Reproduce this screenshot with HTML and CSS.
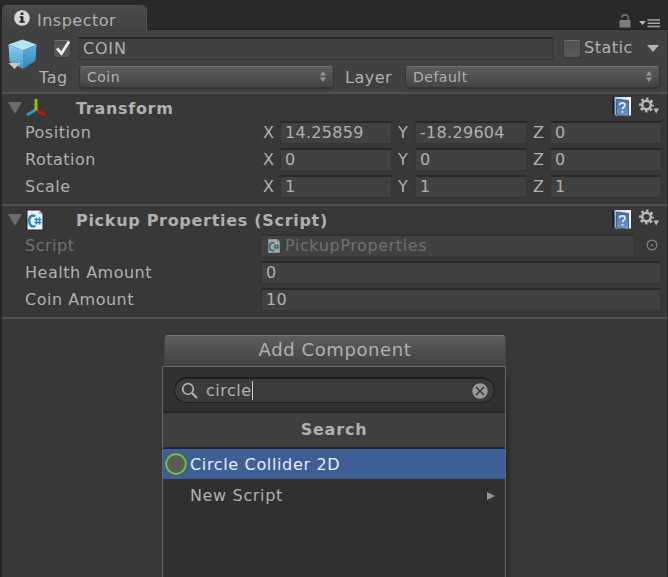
FILE: index.html
```html
<!DOCTYPE html>
<html lang="en">
<head>
<meta charset="utf-8">
<title>Inspector</title>
<link rel="stylesheet" href="styles.css">
</head>
<body>
<svg class="defs" width="0" height="0">
  <defs>
    <linearGradient id="page" x1="0" y1="0" x2="1" y2="0"><stop offset="0" stop-color="#b9cfe5"/><stop offset="1" stop-color="#f0f5fa"/></linearGradient>
    <linearGradient id="cover" x1="0" y1="0" x2="0" y2="1"><stop offset="0" stop-color="#4a6ea6"/><stop offset="1" stop-color="#7697c4"/></linearGradient>
    <linearGradient id="left" x1="0" y1="0" x2="0" y2="1"><stop offset="0" stop-color="#8bcdee"/><stop offset="1" stop-color="#4a9dcc"/></linearGradient>
    <linearGradient id="right" x1="0" y1="0" x2="0" y2="1"><stop offset="0" stop-color="#5eb2df"/><stop offset="1" stop-color="#3287ba"/></linearGradient>
    <symbol id="book" viewBox="0 0 20 21">
      <path d="M0.500 1.5 3 0.5V20L0.500 17z" fill="#101a2c"/>
      <path d="M2.5 1H19V19.5H4z" fill="url(#page)"/>
      <path d="M2.5 1 5 3.5V20.5L2.5 18.500z" fill="#94b3d5"/>
      <path d="M4.500 3.3 16.5 4.5V20.3L4.5 19z" fill="url(#cover)" stroke="#31517e" stroke-width=".8"/>
      <path d="M7.500 9.2C7.500 6 13 6 13 9.2C13 11 10.500 11 10.500 13.300M10.500 15V16.800" fill="none" stroke="#dbe7f4" stroke-width="1.700"/>
    </symbol>
    <symbol id="gear" viewBox="0 0 20 20">
      <circle cx="7.5" cy="8" r="4.3" fill="none" stroke="#b9b9b9" stroke-width="2.5"/>
      <circle cx="7.5" cy="8" r="6.3" fill="none" stroke="#b9b9b9" stroke-width="2.4" stroke-dasharray="2.500 2.448" stroke-dashoffset="1.25"/>
      <path d="M14.500 11.500H20L17.200 16.500z" fill="#b9b9b9"/>
    </symbol>
    <symbol id="csharp" viewBox="0 0 18 22">
      <path d="M1 1H13L17 5V21H1z" fill="#e9eef1" stroke="#222" stroke-width="1"/>
      <path d="M13 1V5H17z" fill="#aebcc4"/>
      <path d="M9.3 7.2C5.5 5 3.2 8 3.2 11.8C3.2 16.5 6 18.5 9.3 16.7" fill="none" stroke="#2587b5" stroke-width="2.4"/>
      <path d="M10.5 8.5V15.5M13.5 8.5V15.5M8.5 10.5H15.5M8.5 13.5H15.5" fill="none" stroke="#2587b5" stroke-width="1.4"/>
    </symbol>
    <symbol id="updown" viewBox="0 0 6 11">
      <path d="M0 4.6 3 0 6 4.6zM0 6.4H6L3 11z" fill="#969696"/>
    </symbol>
  </defs>
</svg>
<div class="inspector">
  <div class="tabbar">
    <div class="tab">
      <svg width="16" height="16" viewBox="0 0 16 16"><circle cx="8" cy="8" r="7.8" fill="#d8d8d8"/><path d="M6.7 2.5H9.4V5H6.7zM5.5 6.2H9.4V11.2H10.8V12.8H5.3V11.2H6.7V7.7H5.5z" fill="#252525"/></svg>
      <span>Inspector</span>
    </div>
    <div class="tabtools">
      <svg width="12" height="14" viewBox="0 0 12 14"><path d="M0.5 6H11.5V13.5H0.5z" fill="#7c7c7c"/><path d="M3 3.5C3 0 9.3 0 9.3 3.5V6.5" fill="none" stroke="#707070" stroke-width="1.6"/></svg>
      <svg width="21" height="9" viewBox="0 0 21 9"><path d="M0 2H7L3.5 6z" fill="#b5b5b5"/><path d="M8.5 1H21M8.5 4.3H21M8.5 7.6H21" stroke="#a5a5a5" stroke-width="1.5"/></svg>
    </div>
  </div>

  <div class="object">
    <svg class="cube" width="32" height="34" viewBox="0 0 32 34">
      <path d="M15.500 1.500 29.500 6.500 16 12.500 1.500 6.500z" fill="#b5e1f5"/>
      <path d="M1.500 6.500 16 12.500V31L2.500 23.500z" fill="url(#left)"/>
      <path d="M29.500 6.500 16 12.500V31L28.500 22.500z" fill="url(#right)"/>
      <path d="M1.500 25H13.500L7.500 31z" fill="#c9c9c9"/>
    </svg>
    <div class="object-rows">
      <div class="object-row name-row">
        <span class="check"><svg width="18" height="18" viewBox="0 0 18 18"><path d="M4 8.500 8.500 13.500 16 1.500" fill="none" stroke="#ececec" stroke-width="2.800"/></svg></span>
        <div class="field name">COIN</div>
        <span class="check"></span>
        <span class="static">Static</span>
        <svg class="caret" width="12" height="7" viewBox="0 0 12 7"><path d="M0 0H12L6 7z" fill="#b4b4b4"/></svg>
      </div>
      <div class="object-row tag-row">
        <span class="tag">Tag</span>
        <div class="popup"><span>Coin</span><svg width="6" height="11"><use href="#updown"/></svg></div>
        <span class="layer">Layer</span>
        <div class="popup"><span>Default</span><svg width="6" height="11"><use href="#updown"/></svg></div>
      </div>
    </div>
  </div>

  <section class="component">
    <header class="head">
      <svg class="fold" width="14" height="12" viewBox="0 0 14 12"><path d="M0 0H14L7 12z" fill="#6c6c6c"/></svg>
      <svg class="kind" width="20" height="20" viewBox="0 0 20 20" fill="none" stroke-width="3"><path d="M10 11.500 1 17" stroke="#2c98d3"/><path d="M10 11.500 19 17" stroke="#c41512"/><path d="M10 12.500V1" stroke="#8dc410"/></svg>
      <h2>Transform</h2>
      <svg class="book" width="20" height="21"><use href="#book"/></svg>
      <svg class="gear" width="20" height="20"><use href="#gear"/></svg>
    </header>
    <div class="row"><span class="label">Position</span>
      <div class="vec"><span>X</span><div class="field">14.25859</div><span>Y</span><div class="field">-18.29604</div><span>Z</span><div class="field">0</div></div></div>
    <div class="row"><span class="label">Rotation</span>
      <div class="vec"><span>X</span><div class="field">0</div><span>Y</span><div class="field">0</div><span>Z</span><div class="field">0</div></div></div>
    <div class="row"><span class="label">Scale</span>
      <div class="vec"><span>X</span><div class="field">1</div><span>Y</span><div class="field">1</div><span>Z</span><div class="field">1</div></div></div>
  </section>

  <section class="component">
    <header class="head">
      <svg class="fold" width="14" height="12" viewBox="0 0 14 12"><path d="M0 0H14L7 12z" fill="#6c6c6c"/></svg>
      <svg class="kind script" width="18" height="22"><use href="#csharp"/></svg>
      <h2>Pickup Properties (Script)</h2>
      <svg class="book" width="20" height="21"><use href="#book"/></svg>
      <svg class="gear" width="20" height="20"><use href="#gear"/></svg>
    </header>
    <div class="row disabled"><span class="label">Script</span>
      <div class="field ref"><svg width="14" height="16" viewBox="0 0 18 22" preserveAspectRatio="none"><use href="#csharp"/></svg><span>PickupProperties</span></div>
      <svg class="picker" width="12" height="12" viewBox="0 0 12 12"><circle cx="6" cy="6" r="4.900" fill="none" stroke="#858585" stroke-width="1.2"/><circle cx="6" cy="6" r="1.1" fill="#858585"/></svg></div>
    <div class="row"><span class="label">Health Amount</span><div class="field wide">0</div></div>
    <div class="row"><span class="label">Coin Amount</span><div class="field wide">10</div></div>
  </section>

  <div class="add">
    <div class="add-button">Add Component</div>
    <div class="menu">
      <div class="search">
        <svg width="18" height="18" viewBox="0 0 18 18" fill="none" stroke="#b2b2b2"><circle cx="7" cy="7" r="5.300" stroke-width="1.700"/><path d="M11 11 16 16" stroke-width="2.200"/></svg>
        <span class="query">circle</span>
        <svg width="16" height="16" viewBox="0 0 16 16"><circle cx="8" cy="8" r="7.700" fill="#999"/><path d="M4 4 12 12M12 4 4 12" stroke="#393939" stroke-width="1.700"/></svg>
      </div>
      <div class="menu-title">Search</div>
      <div class="item selected"><svg width="22" height="22" viewBox="0 0 22 22"><circle cx="11" cy="11" r="9.800" fill="#5a5a5a" stroke="#84c41f" stroke-width="1.700"/></svg><span>Circle Collider 2D</span></div>
      <div class="item"><span>New Script</span><svg class="more" width="8" height="8" viewBox="0 0 8 8"><path d="M0 0 8 4 0 8z" fill="#969696"/></svg></div>
    </div>
  </div>
</div>
</body>
</html>
```
FILE: styles.css
```css
* { box-sizing: border-box; }
html, body { margin: 0; height: 577px; overflow: hidden; }
body {
  background: #282828;
  color: #b0b0b0;
  font: 16px/20px "DejaVu Sans", sans-serif;
  letter-spacing: 0.5px;
}
svg { display: block; flex: none; }
.defs { position: absolute; }
span { white-space: nowrap; }

.inspector {
  height: 577px;
  padding: 0 1px 0 2px;
  overflow: hidden;
  background: linear-gradient(90deg, #252525 2px, #383838 2px, #383838 667px, #292929 667px);
}

.tabbar {
  display: flex;
  justify-content: space-between;
  align-items: flex-end;
  height: 31px;
  margin-right: -1px;
  background: linear-gradient(#292929 29px, #1f1f1f 29px, #1f1f1f 30px, #414141 30px);
}
.tab {
  display: flex;
  gap: 7px;
  width: 145px;
  height: 26px;
  padding: 5px 0 0 12px;
  border: 1px solid #505050;
  border-width: 1px 1px 0 0;
  border-radius: 5px 5px 0 0;
  background: linear-gradient(#4a4a4a, #414141);
}
.tab svg { margin-top: -1px; }
.tabtools { display: flex; align-items: flex-end; gap: 8px; padding: 0 8px 3px 0; }

.object {
  display: flex;
  height: 63px;
  padding: 6px 7px 0 5px;
  background: #414141;
  border-bottom: 2px solid #515151;
}
.cube { margin-top: 1px; }
.object-rows { flex: 1; }
.object-row { display: flex; align-items: center; }
.name-row { height: 23px; padding-left: 14px; }
.check {
  flex: none;
  width: 18px;
  height: 18px;
  border: 1px solid #393939;
  border-top-color: #717171;
  border-radius: 3px;
  background: linear-gradient(#505050, #5a5a5a);
}
.check svg { margin: -1px 0 0 -1px; }
.field {
  height: 23px;
  padding: 0 4px;
  border: 1px solid #343434;
  border-top: 2px solid #292929;
  background: #414141;
  line-height: 20px;
  white-space: nowrap;
}
.name { width: 475px; margin: 0 10px 0 7px; letter-spacing: 0.8px; }
.static { margin: -2px 0 0 3px; }
.caret { margin-left: 14px; }
.tag-row { height: 22px; margin-top: 6px; }
.tag { width: 40px; padding-top: 1px; }
.layer { width: 71px; padding: 1px 0 0 11px; }
.popup {
  display: flex;
  flex: none;
  align-items: center;
  justify-content: space-between;
  width: 255px;
  height: 22px;
  padding: 0 7px 1px;
  border: 1px solid #353535;
  border-top-color: #717171;
  border-radius: 4px;
  background: linear-gradient(#5c5c5c, #444);
  box-shadow: 0 1px 1px #333;
  font-size: 14px;
  letter-spacing: 0.5px;
}

.component { border-bottom: 2px solid #505050; background: #383838; }
.component:nth-of-type(1) { height: 112px; }
.component:nth-of-type(2) { height: 113px; }
.component:nth-of-type(2) .head { height: 28px; }
.head { display: flex; align-items: center; height: 27px; padding: 0 8px 0 6px; }
.kind { margin-left: 4px; }
.script { margin: -1px 2px 0 4px; }
h2 {
  flex: 1;
  margin: 2px 0 0;
  padding-left: 30px;
  font-size: 16px;
  font-weight: bold;
  letter-spacing: 0.7px;
}
.book { margin-top: -2px; }
.gear { margin: -2px 0 0 7px; }
.row { display: flex; height: 27px; padding-left: 23px; }
.label { width: 236px; flex: none; line-height: 24px; }
.vec { display: grid; grid-template-columns: 19px 112px 23px 112px 23px 112px; line-height: 24px; }
.vec span:first-child { padding-left: 2px; }
.vec span:not(:first-child) { padding-left: 6px; }
.row .field { letter-spacing: 0.3px; }
.wide { width: 400px; }
.row .ref { display: flex; align-items: center; width: 373px; padding-left: 5px; letter-spacing: 0.6px; }
.ref svg { margin-right: 4px; opacity: .6; }
.disabled { color: #727272; }
.disabled .field { border-color: #303030 #393939 #393939; }
.picker { margin: 5px 0 0 12px; }

.add { width: 344px; margin: 16px 0 0 160px; }
.add-button {
  height: 31px;
  margin-left: 2px;
  border: 1px solid #454545;
  border-top-color: #777;
  border-radius: 4px 4px 0 0;
  background: linear-gradient(#5e5e5e, #414141);
  font-size: 18px;
  line-height: 28px;
  letter-spacing: 0.6px;
  text-align: center;
}
.menu {
  height: 240px;
  border: 1px solid #686868;
  background: #303030;
  box-shadow: 4px 9px 4px -2px #242424;
}
.search {
  display: flex;
  align-items: center;
  height: 26px;
  margin: 10px 10px 8px 11px;
  padding: 0 6px;
  border: 1px solid #1e1e1e;
  border-top-width: 2px;
  border-radius: 13px;
  background: #3b3b3b;
}
.query { margin: 0 auto 0 7px; border-right: 1px solid #ccc; line-height: 19px; letter-spacing: 0.5px; }
.menu-title {
  height: 38px;
  border: 2px solid #242424;
  border-width: 2px 0;
  background: #3f3f3f;
  font-weight: bold;
  line-height: 34px;
  letter-spacing: 0.8px;
  text-align: center;
}
.item { display: flex; align-items: center; height: 30px; padding: 0 10px 0 27px; letter-spacing: 0.65px; }
.item + .item { padding-top: 3px; }
.selected { padding-left: 2px; background: #3e5f96; color: #e8edf6; }
.selected span { margin: 2px 0 0 3px; }
.more { margin-left: auto; }
```
